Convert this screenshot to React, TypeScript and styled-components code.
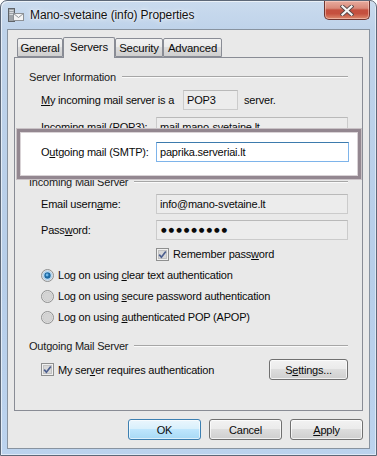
import styled, { createGlobalStyle } from 'styled-components';

const GlobalStyle = createGlobalStyle`
  html, body { margin: 0; padding: 0; background: #fff; }
  body {
    font-family: 'Liberation Sans', Arial, sans-serif;
    font-size: 11px;
    letter-spacing: -0.2px;
    color: #0a0a0a;
  }
  #root { width: 377px; height: 456px; }
`;

const Window = styled.div`
  width: 377px;
  height: 456px;
  box-sizing: border-box;
  border: 1px solid #5d6878;
  border-radius: 7px 7px 0 0;
  padding: 0 6px 6px 6px;
  display: flex;
  flex-direction: column;
  overflow: hidden;
  background: linear-gradient(180deg, #cadbee 0px, #bfd3ea 28px, #b7cee9 60%, #bcd3ee 100%);
  box-shadow: inset 1px 1px 0 rgba(255, 255, 255, 0.6), inset -1px -1px 0 rgba(255, 255, 255, 0.5);
`;

const TitleBar = styled.div`
  height: 28px;
  flex-shrink: 0;
  display: flex;
  align-items: center;
`;

const AppIcon = styled.svg`
  margin-left: 1px;
  flex-shrink: 0;
`;

const Title = styled.span`
  margin-left: 6px;
  font-size: 12px;
  letter-spacing: -0.1px;
  color: #111;
  text-shadow: 0 0 6px rgba(255, 255, 255, 0.95), 0 0 2px #fff;
`;

const CloseButton = styled.div`
  margin-left: auto;
  align-self: flex-start;
  width: 46px;
  height: 19px;
  box-sizing: border-box;
  border: 1px solid #6e3530;
  border-top: none;
  border-radius: 0 0 5px 5px;
  background: linear-gradient(180deg, #e7ab9e 0%, #d98a7a 40%, #c4503f 50%, #c5503e 70%, #dc8a6e 100%);
  box-shadow: inset 0 0 0 1px rgba(255, 220, 210, 0.5);
  display: flex;
  align-items: center;
  justify-content: center;
`;

const Client = styled.div`
  flex: 1;
  box-sizing: border-box;
  border: 1px solid #8893a0;
  background: #e9e9e9;
  padding: 7px 6px 8px 6px;
  display: flex;
  flex-direction: column;
`;

const TabStrip = styled.div`
  height: 20px;
  padding-left: 3px;
  display: flex;
  align-items: flex-end;
  position: relative;
  z-index: 1;
`;

const Tab = styled.div<{ $w: number; $active?: boolean }>`
  width: ${(p) => p.$w}px;
  box-sizing: border-box;
  height: ${(p) => (p.$active ? 21 : 19)}px;
  margin-bottom: ${(p) => (p.$active ? -1 : 0)}px;
  border: 1px solid #898c95;
  border-bottom: ${(p) => (p.$active ? 'none' : '1px solid #898c95')};
  border-radius: 2px 2px 0 0;
  background: ${(p) =>
    p.$active
      ? '#e9e9e9'
      : 'linear-gradient(180deg, #f2f2f2 0%, #ebebeb 45%, #dddddd 50%, #cfcfcf 100%)'};
  display: flex;
  align-items: center;
  justify-content: center;
  padding-bottom: ${(p) => (p.$active ? 3 : 0)}px;
  font-size: 11.4px;
`;

const Panel = styled.div`
  height: 354px;
  box-sizing: border-box;
  border: 1px solid #898c95;
  background: #e9e9e9;
  padding: 11px 14px 0 14px;
  display: flex;
  flex-direction: column;
`;

const GroupHeader = styled.div<{ $mt?: number }>`
  height: 16px;
  margin-top: ${(p) => p.$mt ?? 0}px;
  display: flex;
  align-items: center;
  color: #1a1a1a;
  &::after {
    content: '';
    flex: 1;
    margin-left: 6px;
    border-top: 1px solid #a6a6a6;
    border-bottom: 1px solid #fafafa;
  }
`;

const Row = styled.div<{ $mt?: number; $h?: number }>`
  height: ${(p) => p.$h ?? 20}px;
  margin-top: ${(p) => p.$mt ?? 0}px;
  padding-left: 12px;
  display: flex;
  align-items: center;
`;

const Label = styled.span<{ $w: number }>`
  width: ${(p) => p.$w}px;
  flex-shrink: 0;
  white-space: nowrap;
`;

const Field = styled.div<{ $w?: number; $focus?: boolean }>`
  ${(p) => (p.$w ? `width: ${p.$w}px;` : 'flex: 1;')}
  height: 20px;
  box-sizing: border-box;
  padding-left: 3px;
  display: flex;
  align-items: center;
  white-space: nowrap;
  border: 1px solid ${(p) => (p.$focus ? '#7eb4ea' : '#cbcbcb')};
  border-top-color: ${(p) => (p.$focus ? '#3d7bad' : '#b9b9b9')};
  background: ${(p) => (p.$focus ? '#fff' : '#ececec')};
`;

const Dots = styled.span`
  font-size: 6.5px;
  letter-spacing: 1.9px;
  font-family: 'DejaVu Sans', sans-serif;
  margin-left: 1px;
`;

const After = styled.span`
  margin-left: 6px;
`;

const Callout = styled.div`
  position: relative;
  z-index: 2;
  margin: -8px -13px 0 -12px;
  border: 3px solid #938790;
  background: #fff;
  padding: 10px 9px 14px 21px;
  box-shadow: 0 0 0 1px #c9c2c6, inset 0 0 0 1px #d9d3d6;
`;

const CalloutRow = styled.div`
  height: 20px;
  display: flex;
  align-items: center;
`;

const CheckRow = styled.div<{ $mt?: number; $indent: number }>`
  height: 14px;
  margin-top: ${(p) => p.$mt ?? 0}px;
  padding-left: ${(p) => p.$indent}px;
  display: flex;
  align-items: center;
  gap: 4px;
  white-space: nowrap;
`;

const AuthRow = styled.div`
  height: 21px;
  margin-top: 5px;
  padding-left: 12px;
  display: flex;
  align-items: center;
  gap: 4px;
`;

const Button = styled.div<{ $w: number; $default?: boolean }>`
  width: ${(p) => p.$w}px;
  height: 21px;
  box-sizing: border-box;
  border: 1px solid ${(p) => (p.$default ? '#3c7fb1' : '#707070')};
  border-radius: 3px;
  background: ${(p) =>
    p.$default
      ? 'linear-gradient(180deg, #eaf6fd 0%, #d9f0fc 45%, #bee6fd 50%, #a7d9f5 100%)'
      : 'linear-gradient(180deg, #f2f2f2 0%, #ebebeb 45%, #dddddd 50%, #cfcfcf 100%)'};
  box-shadow: inset 0 0 0 1px ${(p) => (p.$default ? 'rgba(255,255,255,0.6)' : 'rgba(255,255,255,0.7)')};
  display: flex;
  align-items: center;
  justify-content: center;
  flex-shrink: 0;
`;

const Spacer = styled.div`
  flex: 1;
`;

const ButtonBar = styled.div`
  margin-top: 8px;
  display: flex;
  justify-content: flex-end;
  gap: 8px;
`;

const Key = styled.u`
  text-decoration: underline;
  text-underline-offset: 1px;
`;

const CheckBox = () => (
  <svg width="13" height="13" viewBox="0 0 13 13">
    <rect x="0.5" y="0.5" width="12" height="12" fill="#f0f0f0" stroke="#8e8f8f" />
    <rect x="2.5" y="2.5" width="8" height="8" fill="#d8d8d8" stroke="#c2c2c2" />
    <path d="M3.2 6.6 L5.4 9.2 L9.8 3.4" stroke="#4c5f8f" strokeWidth="1.7" fill="none" />
  </svg>
);

const Radio = ({ on }: { on?: boolean }) => (
  <svg width="13" height="13" viewBox="0 0 13 13">
    <circle cx="6.5" cy="6.5" r="6" fill="#e6e6e6" stroke="#8e8f8f" />
    <circle cx="6.5" cy="6.5" r="4.5" fill={on ? '#cfe6f6' : '#d4d4d4'} stroke={on ? '#9fc6e6' : '#c8c8c8'} strokeWidth="0.8" />
    {on && <circle cx="6.5" cy="6.5" r="3.2" fill="#1d6aa4" />}
    {on && <circle cx="6.1" cy="6" r="1.4" fill="#6fb8ea" />}
  </svg>
);

export default function App() {
  return (
    <>
      <GlobalStyle />
      <Window>
        <TitleBar>
          <AppIcon width="16" height="14" viewBox="0 0 16 14">
            <rect x="0.5" y="0.5" width="6" height="13" fill="#9ea3a8" stroke="#5f6469" />
            <rect x="1.5" y="2" width="4" height="1" fill="#d8dbde" />
            <rect x="1.5" y="4" width="4" height="1" fill="#d8dbde" />
            <rect x="1.5" y="6" width="4" height="1" fill="#d8dbde" />
            <rect x="5.5" y="5.5" width="10" height="7" fill="#f4f4f4" stroke="#8d9196" />
            <path d="M5.5 5.5 L10.5 9.5 L15.5 5.5" stroke="#8d9196" fill="none" />
          </AppIcon>
          <Title>Mano-svetaine (info) Properties</Title>
          <CloseButton>
            <svg width="14" height="11" viewBox="0 0 14 11">
              <path d="M2.5 1.5 L11.5 9.5 M11.5 1.5 L2.5 9.5" stroke="#5b4a4a" strokeWidth="4" strokeLinecap="square" />
              <path d="M2.5 1.5 L11.5 9.5 M11.5 1.5 L2.5 9.5" stroke="#f6f6f6" strokeWidth="2.2" strokeLinecap="square" />
            </svg>
          </CloseButton>
        </TitleBar>
        <Client>
          <TabStrip>
            <Tab $w={46}>General</Tab>
            <Tab $w={52} $active>Servers</Tab>
            <Tab $w={48}>Security</Tab>
            <Tab $w={59}>Advanced</Tab>
          </TabStrip>
          <Panel>
            <GroupHeader>Server Information</GroupHeader>
            <Row $mt={5}>
              <Label $w={142}>
                <Key>M</Key>y incoming mail server is a
              </Label>
              <Field $w={55}>POP3</Field>
              <After>server.</After>
            </Row>
            <Row $mt={7}>
              <Label $w={115}>Incoming mail (POP3):</Label>
              <Field>mail.mano-svetaine.lt</Field>
            </Row>
            <Callout>
              <CalloutRow>
                <Label $w={115}>
                  O<Key>u</Key>tgoing mail (SMTP):
                </Label>
                <Field $focus>paprika.serveriai.lt</Field>
              </CalloutRow>
            </Callout>
            <GroupHeader $mt={-5}>Incoming Mail Server</GroupHeader>
            <Row $mt={4}>
              <Label $w={115}>
                Email usern<Key>a</Key>me:
              </Label>
              <Field>info@mano-svetaine.lt</Field>
            </Row>
            <Row $mt={6}>
              <Label $w={115}>
                Pass<Key>w</Key>ord:
              </Label>
              <Field>
                <Dots>●●●●●●●●●</Dots>
              </Field>
            </Row>
            <CheckRow $mt={7} $indent={127}>
              <CheckBox />
              <span>
                Remember pass<Key>w</Key>ord
              </span>
            </CheckRow>
            <CheckRow $mt={7} $indent={12}>
              <Radio on />
              <span>
                Log on using <Key>c</Key>lear text authentication
              </span>
            </CheckRow>
            <CheckRow $mt={7} $indent={12}>
              <Radio />
              <span>
                Log on using <Key>s</Key>ecure password authentication
              </span>
            </CheckRow>
            <CheckRow $mt={7} $indent={12}>
              <Radio />
              <span>
                Log on using <Key>a</Key>uthenticated POP (APOP)
              </span>
            </CheckRow>
            <GroupHeader $mt={14}>Outgoing Mail Server</GroupHeader>
            <AuthRow>
              <CheckBox />
              <span>
                My ser<Key>v</Key>er requires authentication
              </span>
              <Spacer />
              <Button $w={79}>
                S<Key>e</Key>ttings...
              </Button>
            </AuthRow>
          </Panel>
          <ButtonBar>
            <Button $w={73} $default>
              OK
            </Button>
            <Button $w={73}>Cancel</Button>
            <Button $w={73}>
              <Key>A</Key>pply
            </Button>
          </ButtonBar>
        </Client>
      </Window>
    </>
  );
}
